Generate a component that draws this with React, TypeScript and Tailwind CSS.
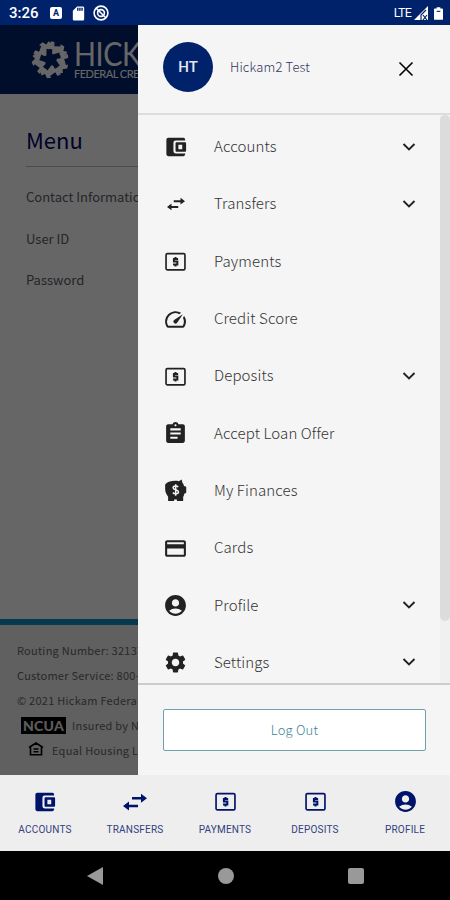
import type { ReactNode } from 'react';
import {
  MdAccountCircle,
  MdAssignment,
  MdOutlineCreditCard,
  MdOutlineSpeed,
  MdSdCard,
  MdSettings,
} from 'react-icons/md';

const WalletIcon = ({ className }: { className?: string }) => (
  <svg viewBox="0 0 24 24" className={className} fill="currentColor">
    <path d="M3.5 2H20a2 2 0 0 1 2 2v1H11.5a2.3 2.3 0 0 0-2.3 2.3v9.4a2.3 2.3 0 0 0 2.3 2.3H22v1a2 2 0 0 1-2 2H3.5A2 2 0 0 1 1.5 20V4a2 2 0 0 1 2-2z" />
    <path fillRule="evenodd" d="M12.5 6.8H22a1 1 0 0 1 1 1v8.4a1 1 0 0 1-1 1h-9.5a1 1 0 0 1-1-1V7.8a1 1 0 0 1 1-1zM14.6 9.6v4.8h4.2V9.6z" />
  </svg>
);

const TransferIcon = ({ className }: { className?: string }) => (
  <svg viewBox="0 0 24 24" className={className} fill="currentColor">
    <path d="M9 7h9V3.7L24 8.2l-6 4.5V9.5H9zM15 14.7H6v-3.3L0 15.9l6 4.5v-3.2h9z" />
  </svg>
);

const MoneyIcon = ({ className }: { className?: string }) => (
  <svg viewBox="0 0 24 24" className={className} fill="none" stroke="currentColor">
    <rect x="1.2" y="3" width="21.6" height="18.6" rx="1.6" strokeWidth="1.9" />
    <path d="M15 9.2h-4.8v2.9h3.9v3.2H9.2M12 6.8v2.4M12 15.3v2.5" strokeWidth="2.3" />
  </svg>
);

const PiggyIcon = ({ className }: { className?: string }) => (
  <svg viewBox="0 0 24 24" className={className}>
    <path
      fill="currentColor"
      d="M6 2.5c3.500-.8 7-.8 9.500-.2L18.500.5l.7 3.500c.8.700 1.300 1.800 1.700 3.300l2.300.8v6.200l-2 1.100c-.2 1.200-.7 2.500-1.200 3.300V23h-6.500v-1.500h-3V23H4.300v-4.500C2.300 16 1.300 13.500 1.200 10.800V5.800c.8-1.500 2.800-2.800 4.800-3.300z"
    />
    <path d="M14.8 8.300c-1-1.400-5.300-1.500-5.300.7 0 2.700 5.600 1.700 5.600 4.500 0 2.400-4.700 2.400-5.800.6M12.200 5.500v12" fill="none" stroke="#f5f5f5" strokeWidth="1.6" />
  </svg>
);

const ChevronIcon = ({ className }: { className?: string }) => (
  <svg viewBox="0 0 14 14" className={className} fill="none" stroke="currentColor" strokeWidth="1.9">
    <path d="M1.500 4 7 9.500l5.500-5.500" />
  </svg>
);

const CloseIcon = ({ className }: { className?: string }) => (
  <svg viewBox="0 0 16 16" className={className} fill="none" stroke="currentColor" strokeWidth="1.6">
    <path d="M1.500 1.500l13 13M14.500 1.500l-13 13" />
  </svg>
);

// five slanted H shapes around a star-shaped gap
const SealIcon = ({ className }: { className?: string }) => (
  <svg viewBox="-50 -50 100 100" className={className} fill="currentColor">
    {[36, 108, 180, 252, 324].map(angle => (
      <path
        key={angle}
        transform={`rotate(${angle})`}
        d="M-27-38-18-42-12-33 1-42-2-47 9-48 14-37 23-41 27-31 12-23 8-28-3-14-8-17-11-24-19-20-25-28-20-31z"
      />
    ))}
  </svg>
);

const menuItems: { label: string; icon: ReactNode; expandable?: boolean }[] = [
  { label: 'Accounts', icon: <WalletIcon className="w-[22px] h-[22px]" />, expandable: true },
  { label: 'Transfers', icon: <TransferIcon className="w-[18px] h-[18px]" />, expandable: true },
  { label: 'Payments', icon: <MoneyIcon className="w-[21px] h-[21px]" /> },
  { label: 'Credit Score', icon: <MdOutlineSpeed className="w-[25px] h-[25px] shrink-0" /> },
  { label: 'Deposits', icon: <MoneyIcon className="w-[21px] h-[21px]" />, expandable: true },
  { label: 'Accept Loan Offer', icon: <MdAssignment className="w-[25px] h-[25px]" /> },
  { label: 'My Finances', icon: <PiggyIcon className="w-[23px] h-[23px]" /> },
  { label: 'Cards', icon: <MdOutlineCreditCard className="w-[25px] h-[25px]" /> },
  { label: 'Profile', icon: <MdAccountCircle className="w-[25px] h-[25px]" />, expandable: true },
  { label: 'Settings', icon: <MdSettings className="w-[25px] h-[25px]" />, expandable: true },
];

const tabs = [
  { label: 'ACCOUNTS', icon: <WalletIcon className="w-[22px] h-[22px]" /> },
  { label: 'TRANSFERS', icon: <TransferIcon className="w-6 h-6" /> },
  { label: 'PAYMENTS', icon: <MoneyIcon className="w-[21px] h-[21px]" /> },
  { label: 'DEPOSITS', icon: <MoneyIcon className="w-[21px] h-[21px]" /> },
  { label: 'PROFILE', icon: <MdAccountCircle className="w-[25px] h-[25px]" /> },
];

function StatusBar() {
  return (
    <div className="h-[25px] shrink-0 bg-[#00226b] text-white flex items-center justify-between pl-[9px] pr-[7px] pt-px font-[Roboto,sans-serif]">
      <div className="flex items-center">
        <span className="text-[15px] font-medium w-[41px]">3:26</span>
        <span className="w-[12px] h-[12px] rounded-[2px] bg-white text-[#00226b] text-[9px] leading-none font-bold flex items-center justify-center">A</span>
        <MdSdCard className="w-[17px] h-[17px] ml-[8px]" />
        <svg viewBox="0 0 16 16" className="w-4 h-4 ml-[6px]" fill="none" stroke="currentColor" strokeWidth="1.6">
          <circle cx="8" cy="8" r="6.9" />
          <circle cx="8" cy="8" r="3.4" />
          <path d="M3 3l10 10" />
        </svg>
      </div>
      <div className="flex items-center">
        <span className="text-[12.5px] tracking-[-0.8px]">LTE</span>
        <svg viewBox="0 0 14 14" className="w-[14px] h-[14px] ml-[3px]">
          <path d="M0 14 14 0v14z" fill="#fff" />
          <path d="M7 14V9l5-5M9 9l4 5M9 14l4-5" stroke="#00226b" strokeWidth="1.2" fill="none" />
        </svg>
        <svg viewBox="0 0 10 14" className="w-[9px] h-[13px] ml-[6px]" fill="#fff">
          <path d="M3 0h4v1.500h2a1 1 0 0 1 1 1V13a1 1 0 0 1-1 1H1a1 1 0 0 1-1-1V2.500a1 1 0 0 1 1-1h2z" />
          <path d="M3 4h4v1.200H3z" fill="#00226b" />
        </svg>
      </div>
    </div>
  );
}

function Page() {
  return (
    <div className="h-full flex flex-col bg-white whitespace-nowrap overflow-hidden">
      <header className="h-[69px] shrink-0 bg-[#00226b] text-white flex items-center pl-[31px]">
        <SealIcon className="w-[39px] h-[39px] shrink-0" />
        <div className="ml-[4px] font-[Lato,sans-serif]">
          <div className="text-[32px] leading-[27px] tracking-[-0.5px] scale-x-90 origin-left">HICK</div>
          <div className="text-[11px] leading-[13px] font-medium tracking-[-0.5px]">FEDERAL CRE</div>
        </div>
      </header>
      <main className="flex-1 pl-[26px] pt-[28px]">
        <h1 className="text-[22px] leading-[34px] font-normal text-[#00006b]">Menu</h1>
        <div className="mt-[10px] border-t border-[#bbb]" />
        <ul className="pt-[9px] text-[13px] leading-[41.7px] text-[#5c5c6a]">
          <li>Contact Information</li>
          <li>User ID</li>
          <li>Password</li>
        </ul>
      </main>
      <footer className="h-[156px] shrink-0 bg-[#f0f0f0] border-t-[6px] border-[#0d8fc3] pl-[17px] pt-[13px] text-[11px] leading-[25px] tracking-[0.25px] text-[#666]">
        <p>Routing Number: 32137</p>
        <p>Customer Service: 800-4</p>
        <p>© 2021 Hickam Federal</p>
        <p className="flex items-center pl-[4px]">
          <span className="w-[45px] h-[17px] shrink-0 bg-black text-[#e5e5e5] font-[Lato,sans-serif] font-black text-[14px] leading-[17px] text-center mr-[6px]">NCUA</span>
          Insured by NCUA
        </p>
        <p className="flex items-center pl-[11px]">
          <svg viewBox="0 0 16 14" className="w-4 h-[14px] shrink-0 mr-[8px] -mt-1" fill="none" stroke="#000" strokeWidth="1.6">
            <path d="M1 5.500 8 1l7 4.500M2.500 5v7.800h11V5M5.500 7h5M5.500 9.800h5" />
          </svg>
          Equal Housing Lender
        </p>
      </footer>
    </div>
  );
}

function Drawer() {
  return (
    <aside className="w-[312px] shrink-0 bg-[#f5f5f5] flex flex-col">
      <div className="h-[90px] shrink-0 border-b-2 border-[#ddd] flex items-center pl-[25px] pr-[36px] pb-[4px]">
        <div className="w-[50px] h-[50px] rounded-full bg-[#00226b] text-[#e4e8f4] font-[Roboto,sans-serif] text-[15px] font-medium flex items-center justify-center">HT</div>
        <span className="ml-[17px] flex-1 text-[13px] tracking-[0.15px] font-light text-[#34345c]">Hickam2 Test</span>
        <CloseIcon className="w-4 h-4 mt-[3px] text-black" />
      </div>
      <div className="flex-1 min-h-0 flex overflow-hidden">
        <ul className="flex-1 pt-[3px]">
          {menuItems.map(item => (
            <li key={item.label} className="h-[57.3px] flex items-center pl-[25px] pr-[24px]">
              <span className="w-[25px] flex justify-center text-[#222] pt-px">{item.icon}</span>
              <span className="ml-[26px] flex-1 text-[15px] leading-6 tracking-[0.12px] font-light text-[#333] -mt-px">{item.label}</span>
              {item.expandable && <ChevronIcon className="w-[14px] h-[14px] text-[#222]" />}
            </li>
          ))}
        </ul>
        <div className="w-[10px] bg-[#f0f0f0]">
          <div className="h-[506px] rounded-[5px] bg-[#dcdcdc]" />
        </div>
      </div>
      <div className="h-[92px] shrink-0 border-t-2 border-[#ccc] px-[25px] pt-[24px]">
        <button className="w-[263px] h-[42px] rounded-[2px] border border-[#6fa0ad] bg-white text-[13px] tracking-[0.2px] font-light text-[#3f8396] pb-px">Log Out</button>
      </div>
    </aside>
  );
}

export default function App() {
  return (
    <div className="w-[450px] h-[900px] flex flex-col overflow-hidden font-['Noto_Sans_CJK_SC',sans-serif]">
      <StatusBar />
      <div className="h-[750px] shrink-0 flex">
        <div className="relative w-[138px] shrink-0">
          <Page />
          <div className="absolute inset-0 bg-black/60" />
        </div>
        <Drawer />
      </div>
      <nav className="h-[76px] shrink-0 bg-[#eee] text-[#00136b] grid grid-cols-5 font-[Roboto,sans-serif]">
        {tabs.map(tab => (
          <div key={tab.label} className="flex flex-col items-center pt-[14px]">
            <span className="h-[25px] flex items-center">{tab.icon}</span>
            <span className="mt-[9px] text-[10px] leading-[14px] tracking-[0.2px] text-[#33417f]">{tab.label}</span>
          </div>
        ))}
      </nav>
      <div className="flex-1 bg-black flex items-center justify-center">
        <svg viewBox="0 0 18 20" className="w-[18px] h-5 mr-[113px]" fill="#999">
          <path d="M0 10 16 1v18z" />
        </svg>
        <div className="w-4 h-4 rounded-full bg-[#999]" />
        <div className="w-4 h-4 rounded-[2px] bg-[#999] ml-[114px]" />
      </div>
    </div>
  );
}
